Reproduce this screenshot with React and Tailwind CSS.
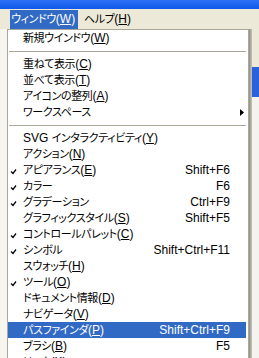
import React from "react";

const items = [
  { label: "新規ウインドウ", key: "W" },
  "sep",
  { label: "重ねて表示", key: "C" },
  { label: "並べて表示", key: "T" },
  { label: "アイコンの整列", key: "A" },
  { label: "ワークスペース", sub: true },
  "sep",
  { prefix: "SVG ", label: "インタラクティビティ", key: "Y" },
  { label: "アクション", key: "N" },
  { label: "アピアランス", key: "E", checked: true, shortcut: "Shift+F6" },
  { label: "カラー", checked: true, shortcut: "F6" },
  { label: "グラデーション", checked: true, shortcut: "Ctrl+F9" },
  { label: "グラフィックスタイル", key: "S", shortcut: "Shift+F5" },
  { label: "コントロールパレット", key: "C", checked: true },
  { label: "シンボル", checked: true, shortcut: "Shift+Ctrl+F11" },
  { label: "スウォッチ", key: "H" },
  { label: "ツール", key: "O", checked: true },
  { label: "ドキュメント情報", key: "D" },
  { label: "ナビゲータ", key: "V" },
  { label: "パスファインダ", key: "P", shortcut: "Shift+Ctrl+F9", active: true },
  { label: "ブラシ", key: "B", shortcut: "F5" },
  { label: "リンク", key: "K" },
];

const Check = () => (
  <svg width="7" height="7" viewBox="0 0 7 7" className="ml-[2px] mt-[3px]">
    <path d="M1 3.5 L3 5.5 L6 1.5" stroke="currentColor" strokeWidth="1.3" fill="none" />
  </svg>
);

const Arrow = () => (
  <svg width="4" height="7" viewBox="0 0 4 7" className="ml-[10px]">
    <path d="M0 0 L4 3.5 L0 7 Z" fill="currentColor" />
  </svg>
);

// mnemonic letter, underlined like the Windows menus do
const Key = ({ k }) => (
  <span className="text-[12px] tracking-normal">
    (<span className="underline underline-offset-[1px]">{k}</span>)
  </span>
);

const MenuRow = ({ item }) => {
  if (item === "sep") {
    return (
      <div className="h-[10px] flex items-center pl-[1px]">
        <div className="h-px w-full bg-[#aca899]" />
      </div>
    );
  }
  return (
    <div
      className={
        "h-[16px] flex items-center whitespace-nowrap " +
        (item.active ? "bg-[#316ac5] text-white" : "text-black")
      }
    >
      <div className="w-[15px] h-full flex items-center">{item.checked && <Check />}</div>
      <div className="flex-1 leading-[16px]">
        {item.prefix && <span className="whitespace-pre">{item.prefix}</span>}
        <span className="text-[11px] tracking-[-0.4px]">{item.label}</span>
        {item.key && <Key k={item.key} />}
      </div>
      {item.shortcut && <div className="leading-[16px]">{item.shortcut}</div>}
      <div className="w-[16px] flex items-center">{item.sub && <Arrow />}</div>
    </div>
  );
};

const App = () => {
  return (
    <div className="w-[259px] h-[358px] overflow-hidden bg-[#ece9d8] text-[12px] [font-family:'Liberation_Sans','Noto_Sans_CJK_JP',sans-serif] [font-feature-settings:'palt']">
      {/* title bar remnant */}
      <div className="h-[9px] bg-gradient-to-b from-[#2b70f4] to-[#0f58ea]" />

      {/* menu bar */}
      <div className="h-[20px] flex bg-[#ece9d8] pl-[10px]">
        <div className="mt-[1px] h-[19px] w-[68px] pl-[1px] bg-[#316ac5] text-white leading-[19px] whitespace-nowrap">
          <span className="text-[11px] tracking-[-0.4px]">ウィンドウ</span>
          <Key k="W" />
        </div>
        <div className="ml-[6px] leading-[21px] whitespace-nowrap">
          <span className="text-[11px] tracking-[-0.4px]">ヘルプ</span>
          <Key k="H" />
        </div>
      </div>

      <div className="flex">
        <div className="w-[7px] h-[329px] bg-[#f6f5f0]" />

        <div className="w-[242px] border border-[#aca899] bg-white pr-[2px]">
          {items.map((item, i) => (
            <MenuRow key={i} item={item} />
          ))}
        </div>

        <div className="w-[10px] flex">
          <div className="w-[3px] bg-gradient-to-r from-[#8f8d86] to-[#c8c5ba]" />
          <div className="flex-1 flex flex-col">
            <div className="h-[38px] bg-[#ece9d8]" />
            <div className="h-[30px] bg-[#2a62dc]" />
            <div className="flex-1 bg-[#f4f3ee]" />
          </div>
        </div>
      </div>
    </div>
  );
};

export default App;
